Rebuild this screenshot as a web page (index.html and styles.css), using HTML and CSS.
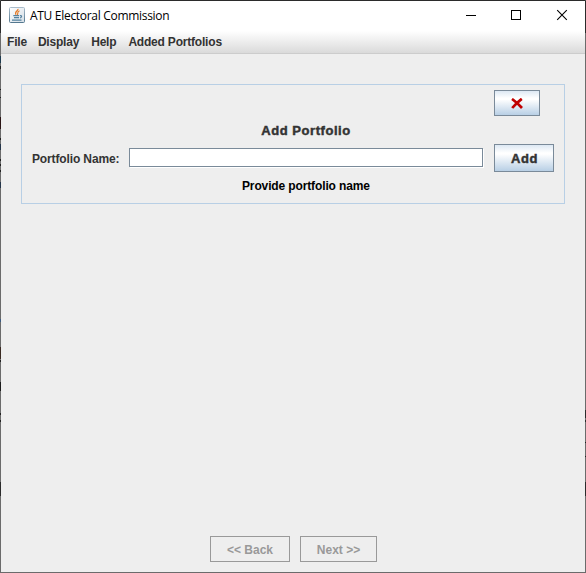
FILE: index.html
```
<!DOCTYPE html>
<html lang="en">
<head>
<meta charset="utf-8">
<title>ATU Electoral Commission</title>
<link rel="stylesheet" href="styles.css">
</head>
<body>
<div class="window">
  <header class="titlebar">
    <svg class="app-icon" width="16" height="16" viewBox="0 0 16 16">
      <defs><linearGradient id="tile" x1="0" y1="0" x2="0" y2="1"><stop offset="0" stop-color="#a9bccb"/><stop offset="1" stop-color="#54788f"/></linearGradient>
      <linearGradient id="face" x1="0" y1="0" x2="1" y2="1"><stop offset="0" stop-color="#fff"/><stop offset="1" stop-color="#d3dde5"/></linearGradient></defs>
      <rect x=".5" y=".5" width="15" height="15" rx="1" fill="url(#face)" stroke="url(#tile)"/>
      <path d="M9 1.800C9.500 4 5 4.500 7 7.800M10.500 3.800C7.500 5 9.500 6.200 8.300 8" fill="none" stroke="#e77a25" stroke-width="1.200"/>
      <path d="M4.300 8.700h5.800M5 10.700h5M3 13.200h9.500M11 8.700c2.300-.4 1.800 1.900 0 2.300" fill="none" stroke="#55829f" stroke-width="1.200"/>
    </svg>
    <span class="title">ATU Electoral Commission</span>
    <svg class="controls" width="136" height="30" viewBox="0 0 136 30" fill="none" stroke="#000" stroke-width="1">
      <path d="M17 14.500h10M62.500 9.500h9v9h-9z" shape-rendering="crispEdges"/>
      <path d="M108.200 9.200l9.600 9.600M117.800 9.200l-9.600 9.600" stroke-width="1.100"/>
    </svg>
  </header>
  <nav class="menubar"><span>File</span><span>Display</span><span>Help</span><span>Added Portfolios</span></nav>
  <main class="content">
    <section class="panel">
      <button class="button close" aria-label="Close"><svg width="12" height="11" viewBox="0 0 12 11"><path d="M1 1Q6 4.500 11 10M10.800 .8Q5.500 4.800 1.200 10" fill="none" stroke="#c00000" stroke-width="2.700"/></svg></button>
      <h1 class="heading">Add Portfolio</h1>
      <div class="form-row">
        <label class="label" for="portfolio">Portfolio Name:</label>
        <input class="field" id="portfolio" type="text">
        <button class="button add">Add</button>
      </div>
      <p class="hint">Provide portfolio name</p>
    </section>
    <footer class="pager"><button class="nav-button back" disabled>&lt;&lt; Back</button><button class="nav-button next" disabled>Next &gt;&gt;</button></footer>
  </main>
</div>
</body>
</html>
```
FILE: styles.css
```
* { box-sizing: border-box; }
body { margin: 0; font: bold 12px/16px "Liberation Sans", Arial, sans-serif; color: #333; letter-spacing: -0.13px; }
button { font: inherit; color: inherit; padding: 0; margin: 0; }
.window {
  width: 586px; height: 573px; display: flex; flex-direction: column; position: relative;
  border: 1px solid #6b6b6b; border-top-color: #2b2b2b; background: #eee;
}
.window::before, .window::after { content: ""; position: absolute; width: 1px; top: 0; height: 571px; }
.window::before {
  left: -1px;
  background: linear-gradient(#2b2b2b 32px, transparent 32px 55px, #1e3c50 55px 62px, transparent 62px 65px, #222 65px 68px, transparent 68px 88px, #222 88px 89px, transparent 89px 96px, #222 96px 97px, transparent 97px 116px, #2a1414 116px 128px, transparent 128px 137px, #222 137px 139px, transparent 139px 143px, #25364a 143px 149px, transparent 149px 158px, #222 158px 160px, transparent 160px 163px, #222 163px 165px, transparent 165px 169px, #222 169px 171px, transparent 171px 181px, #25364a 181px 187px, transparent 187px 318px, #3c5a80 318px 321px, transparent 321px 346px, #3a2a22 346px 358px, #777 358px 359px, #222 359px 361px, transparent 361px 381px, #1c1c1c 381px 390px, transparent 390px 412px, #222 412px 414px, transparent 414px 419px, #222 419px 421px, transparent 421px 481px, #2b2b2b 481px 495px, transparent 495px);
}
.window::after {
  right: -1px;
  background: linear-gradient(#2b2b2b 32px, transparent 32px 409px, #2b2b2b 409px 417px, transparent 417px 419px, #2b2b2b 419px 421px, transparent 421px 441px, #222 441px 442px, transparent 442px 455px, #222 455px 456px, transparent 456px 481px, #2b2b2b 481px 495px, transparent 495px);
}
.titlebar { height: 30px; flex: none; display: flex; align-items: center; background: #fff; padding-left: 8px; }
.app-icon { flex: none; margin-top: -2px; }
.title { margin-left: 5px; font: 12px/16px "Open Sans", "Noto Sans", sans-serif; letter-spacing: -0.3px; color: #000; white-space: nowrap; }
.controls { margin-left: auto; }
.menubar {
  height: 23px; flex: none; display: flex; gap: 12px; padding: 3px 6px 0;
  background: linear-gradient(#fff, #dadada); border-bottom: 1px solid #ccc;
}
.menubar span { letter-spacing: -0.2px; }
.menubar span:first-child { margin-right: -1px; }
.content { flex: 1; display: flex; flex-direction: column; justify-content: space-between; padding: 30px 20px 10px; }
.panel {
  width: 544px; height: 120px; border: 1px solid #b8cfe5;
  padding: 5px 10px; display: flex; flex-direction: column;
}
.button {
  border: 1px solid #7a8a99; display: flex; align-items: center; justify-content: center;
  background: linear-gradient(#dde8f3 0%, #fff 30%, #fff 35%, #b8cfe5 100%);
}
.close { align-self: flex-end; width: 46px; height: 26px; margin-right: 14px; }
.heading, .add { font-size: 13px; font-weight: bold; letter-spacing: 0.55px; -webkit-text-stroke: 0.45px #333; }
.heading { margin: 7px 0 5px; line-height: 16px; width: 548px; text-align: center; }
.form-row { display: flex; align-items: center; height: 28px; }
.label { width: 97px; flex: none; white-space: nowrap; padding-top: 2px; }
.field { width: 354px; height: 19px; border: 1px solid #7a8a99; background: #fff; padding: 0; margin: 0 11px 1px 0; box-shadow: 1px 1px 0 #fff; }
.add { width: 60px; height: 28px; flex: none; padding: 2px 0 0 1px; }
.hint { margin: 6px 0 0 210px; color: #000; }
.pager { display: flex; gap: 10px; justify-content: center; padding-left: 1px; }
.nav-button { height: 26px; border: 1px solid #999; background: #eee; color: #999; padding-top: 2px; }
.back { width: 80px; }
.next { width: 77px; }
```
